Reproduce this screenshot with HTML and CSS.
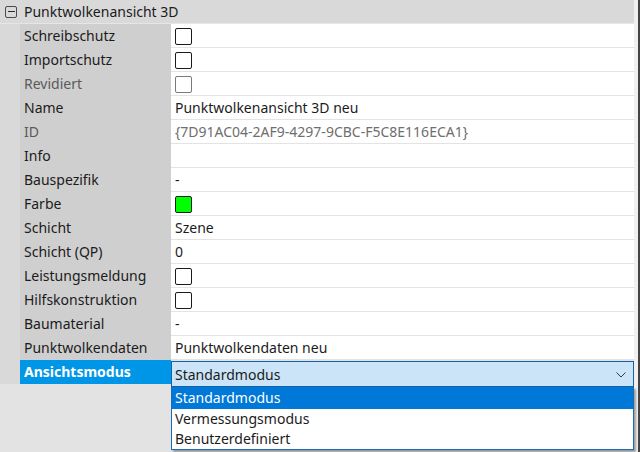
FILE: index.html
```html
<!DOCTYPE html>
<html lang="de">
<head>
<meta charset="utf-8">
<link rel="stylesheet" href="styles.css">
</head>
<body>
<div class="frame">
  <div class="panel">
    <div class="header">
      <span class="toggle"><span class="minus"></span></span>
      <span class="title">Punktwolkenansicht 3D</span>
    </div>
    <div class="row"><div class="gutter"></div><div class="label">Schreibschutz</div><div class="value"><span class="check"></span></div></div>
    <div class="row"><div class="gutter"></div><div class="label">Importschutz</div><div class="value"><span class="check"></span></div></div>
    <div class="row"><div class="gutter"></div><div class="label disabled">Revidiert</div><div class="value"><span class="check check-disabled"></span></div></div>
    <div class="row"><div class="gutter"></div><div class="label">Name</div><div class="value">Punktwolkenansicht 3D neu</div></div>
    <div class="row"><div class="gutter"></div><div class="label disabled">ID</div><div class="value muted">{7D91AC04-2AF9-4297-9CBC-F5C8E116ECA1}</div></div>
    <div class="row"><div class="gutter"></div><div class="label">Info</div><div class="value"></div></div>
    <div class="row"><div class="gutter"></div><div class="label">Bauspezifik</div><div class="value">-</div></div>
    <div class="row"><div class="gutter"></div><div class="label">Farbe</div><div class="value"><span class="check swatch"></span></div></div>
    <div class="row"><div class="gutter"></div><div class="label">Schicht</div><div class="value">Szene</div></div>
    <div class="row"><div class="gutter"></div><div class="label">Schicht (QP)</div><div class="value">0</div></div>
    <div class="row"><div class="gutter"></div><div class="label">Leistungsmeldung</div><div class="value"><span class="check"></span></div></div>
    <div class="row"><div class="gutter"></div><div class="label">Hilfskonstruktion</div><div class="value"><span class="check"></span></div></div>
    <div class="row"><div class="gutter"></div><div class="label">Baumaterial</div><div class="value">-</div></div>
    <div class="row"><div class="gutter"></div><div class="label">Punktwolkendaten</div><div class="value">Punktwolkendaten neu</div></div>
    <div class="row row-active"><div class="gutter"></div><div class="label label-active">Ansichtsmodus</div>
      <div class="value value-combo">
        <div class="combo">
          <span class="combo-text">Standardmodus</span>
          <svg class="chevron" width="10" height="6" viewBox="0 0 10 6"><path d="M0.5 0.5 L5 5 L9.5 0.5" fill="none" stroke="#3a3a3a" stroke-width="1"/></svg>
          <div class="list">
            <div class="item item-selected">Standardmodus</div>
            <div class="item">Vermessungsmodus</div>
            <div class="item">Benutzerdefiniert</div>
          </div>
        </div>
      </div>
    </div>
    <div class="rest"></div>
  </div>
  <div class="strip"></div>
  <div class="edge"></div>
</div>
</body>
</html>
```

FILE: styles.css
```css
html, body {
  margin: 0;
  padding: 0;
}
body {
  width: 640px;
  height: 452px;
  overflow: hidden;
  background: #e3e3e3;
  font-family: "Noto Sans", "Open Sans", sans-serif;
  font-size: 13px;
  color: #1b1b1b;
}
.frame {
  display: flex;
  height: 452px;
}
.panel {
  width: 634px;
  display: flex;
  flex-direction: column;
}
.strip {
  width: 4px;
  background: #f0f0f0;
}
.edge {
  width: 2px;
  background: #444444;
}
.header {
  height: 24px;
  background: #d9d9d9;
  display: flex;
  align-items: center;
  box-sizing: border-box;
  border-bottom: 1px solid #e6e6e6;
}
.toggle {
  width: 12px;
  height: 12px;
  box-sizing: border-box;
  border: 1px solid #4a4a4a;
  border-radius: 2px;
  margin-left: 5px;
  margin-right: 7px;
  display: flex;
  align-items: center;
  justify-content: center;
}
.minus {
  width: 7px;
  height: 1px;
  background: #2a2a2a;
}
.title {
  font-size: 14px;
  line-height: 24px;
}
.row {
  height: 24px;
  display: grid;
  grid-template-columns: 20px 151px 463px;
}
.gutter {
  background: #d9d9d9;
}
.label {
  background: #cfcfcf;
  padding-left: 4px;
  line-height: 24px;
  font-size: 14px;
  white-space: nowrap;
}
.label.disabled {
  color: #5a5a5a;
}
.value {
  background: #ffffff;
  border-bottom: 1px solid #e3e3e3;
  box-sizing: border-box;
  padding-left: 4px;
  display: flex;
  align-items: center;
  font-size: 14px;
  white-space: nowrap;
}
.value.muted {
  color: #6e6e6e;
}
.check {
  width: 17px;
  height: 17px;
  box-sizing: border-box;
  border: 1px solid #1a1a1a;
  border-radius: 2px;
  background: #ffffff;
  margin-top: 1px;
}
.check-disabled {
  border-color: #7a7a7a;
}
.swatch {
  background: #00ff00;
  border-color: #202020;
}
.label-active {
  background: #0096e8;
  color: #ffffff;
  font-weight: bold;
}
.value-combo {
  background: transparent;
  border-bottom: none;
  padding-left: 0;
  display: block;
}
.combo {
  position: relative;
  margin-top: 1px;
  height: 26px;
  box-sizing: border-box;
  border: 1px solid #1661a8;
  background: #cce4f7;
  display: flex;
  align-items: center;
  padding-left: 3px;
}
.combo-text {
  flex: 1;
  font-size: 14px;
}
.chevron {
  margin-right: 7px;
  margin-top: 1px;
}
.list {
  position: absolute;
  left: -1px;
  right: -1px;
  top: 25px;
  height: 63px;
  box-sizing: border-box;
  border: 1px solid #1c6cb5;
  border-top: none;
  background: #ffffff;
  box-shadow: 2px 2px 2px rgba(0, 0, 0, 0.35);
  z-index: 2;
}
.item {
  height: 20px;
  line-height: 20px;
  padding-left: 3px;
  font-size: 14px;
}
.item-selected {
  height: 22px;
  line-height: 22px;
  background: #0078d7;
  color: #ffffff;
}
.rest {
  flex: 1;
  background: #e3e3e3;
}
```
